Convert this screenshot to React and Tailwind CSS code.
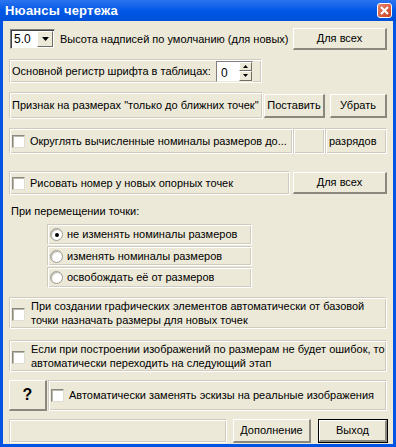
import React from 'react';

const font = { fontFamily: '"Liberation Sans", Arial, sans-serif' };

const Btn = ({ children, className = '', def = false }) => (
  <div className={`${def ? 'border border-black' : ''} ${className}`}>
    <div className="h-full w-full flex items-center justify-center bg-[#ece9d8] border-t border-l border-white border-b-2 border-r-2 border-b-[#8a887c] border-r-[#8a887c] text-black whitespace-nowrap">
      {children}
    </div>
  </div>
);

const Panel = ({ children, className = '' }) => (
  <div className={`border border-t-[#cfccbf] border-l-[#cfccbf] border-b-white border-r-white shadow-[inset_1px_1px_0_#ffffff,inset_-1px_-1px_0_#cfccbf] flex items-center whitespace-nowrap ${className}`}>
    {children}
  </div>
);

const Check = () => (
  <div className="w-[13px] h-[13px] shrink-0 bg-white border border-t-[#8c8a80] border-l-[#8c8a80] border-b-[#e0ddd2] border-r-[#e0ddd2] shadow-[inset_1px_1px_0_#b8b5aa]" />
);

const Radio = ({ on }) => (
  <div className="w-[13px] h-[13px] shrink-0 rounded-full bg-white border border-[#9e9c92] flex items-center justify-center shadow-[inset_1px_1px_1px_#b8b5aa]">
    {on && <div className="w-[4px] h-[4px] rounded-full bg-black" />}
  </div>
);

export default function App() {
  return (
    <div style={font} className="w-[396px] h-[447px] flex flex-col bg-[#0054e3] text-[11px] text-black">
      <div className="h-[21px] shrink-0 flex items-center justify-between pl-[5px] pr-[4px] bg-gradient-to-b from-[#2a74f0] via-[#0058e6] to-[#0050d8]">
        <span className="text-white font-bold text-[13px] tracking-[0.2px]">Нюансы чертежа</span>
        <div className="w-[15px] h-[15px] rounded-[3px] border border-white bg-gradient-to-br from-[#e8856a] to-[#c8401c] flex items-center justify-center">
          <svg width="9" height="9" viewBox="0 0 9 9">
            <path d="M1 1 L8 8 M8 1 L1 8" stroke="white" strokeWidth="2" />
          </svg>
        </div>
      </div>

      <div className="flex-1 mx-[3px] mb-[3px] bg-[#ece9d8] pl-[6px] pr-[6px] pt-[7px] flex flex-col">
        {/* row 1 */}
        <div className="flex items-center h-[22px] whitespace-nowrap">
          <div className="ml-[1px] w-[45px] h-[20px] shrink-0 bg-white border border-t-[#808080] border-l-[#808080] border-b-[#ece9d8] border-r-[#ece9d8] shadow-[inset_1px_1px_0_#404040] flex items-center">
            <span className="pl-[3px] flex-1 text-[12px]">5.0</span>
            <div className="w-[16px] h-[16px] mr-[1px] bg-[#ece9d8] border-t border-l border-white border-b border-r border-b-[#716f64] border-r-[#716f64] flex items-center justify-center">
              <svg width="7" height="4" viewBox="0 0 7 4"><path d="M0 0 H7 L3.5 4 Z" fill="black" /></svg>
            </div>
          </div>
          <span className="ml-[5px]">Высота надписей по умолчанию (для новых)</span>
          <Btn className="ml-auto w-[94px] h-[22px] shrink-0">Для всех</Btn>
        </div>

        {/* row 2 */}
        <Panel className="mt-[9px] w-[253px] h-[24px]">
          <span className="pl-[2px]">Основной регистр шрифта в таблицах:</span>
          <div className="ml-auto mr-[8px] w-[37px] h-[21px] shrink-0 bg-white border border-t-[#808080] border-l-[#808080] border-b-[#ece9d8] border-r-[#ece9d8] flex">
            <span className="flex-1 pl-[4px] pt-[2px] text-[12px]">0</span>
            <div className="w-[13px] flex flex-col">
              <div className="flex-1 bg-[#ece9d8] border-t border-l border-white border-b border-r border-b-[#716f64] border-r-[#716f64] flex items-center justify-center">
                <svg width="5" height="3" viewBox="0 0 5 3"><path d="M0 3 H5 L2.5 0 Z" fill="black" /></svg>
              </div>
              <div className="flex-1 bg-[#ece9d8] border-t border-l border-white border-b border-r border-b-[#716f64] border-r-[#716f64] flex items-center justify-center">
                <svg width="5" height="3" viewBox="0 0 5 3"><path d="M0 0 H5 L2.5 3 Z" fill="black" /></svg>
              </div>
            </div>
          </div>
        </Panel>

        {/* row 3 */}
        <div className="mt-[9px] flex items-center h-[27px]">
          <Panel className="w-[254px] h-[27px] shrink-0">
            <span className="pl-[2px]">Признак на размерах "только до ближних точек"</span>
          </Panel>
          <Btn className="ml-[1px] w-[61px] h-[24px] shrink-0">Поставить</Btn>
          <Btn className="ml-[5px] w-[57px] h-[24px] shrink-0">Убрать</Btn>
        </div>

        {/* row 4 */}
        <div className="mt-[9px] flex h-[26px]">
          <Panel className="w-[284px] h-[26px] shrink-0">
            <div className="ml-[2px]"><Check /></div>
            <span className="ml-[5px]">Округлять вычисленные номиналы размеров до...</span>
          </Panel>
          <Panel className="w-[32px] h-[26px] shrink-0" />
          <Panel className="w-[62px] h-[26px] shrink-0">
            <span className="pl-[3px]">разрядов</span>
          </Panel>
        </div>

        {/* row 5 */}
        <div className="mt-[17px] flex items-center h-[24px]">
          <Panel className="w-[281px] h-[24px] shrink-0">
            <div className="ml-[2px]"><Check /></div>
            <span className="ml-[5px]">Рисовать номер у новых опорных точек</span>
          </Panel>
          <Btn className="ml-auto w-[94px] h-[22px] shrink-0">Для всех</Btn>
        </div>

        {/* row 6 */}
        <div className="mt-[9px] pl-[2px] h-[14px] leading-[14px]">При перемещении точки:</div>
        <div className="mt-[6px] ml-[38px] w-[205px] flex flex-col gap-[1px]">
          <Panel className="h-[21px]">
            <div className="ml-[2px]"><Radio on /></div>
            <span className="ml-[4px]">не изменять номиналы размеров</span>
          </Panel>
          <Panel className="h-[20px]">
            <div className="ml-[2px]"><Radio /></div>
            <span className="ml-[4px]">изменять номиналы размеров</span>
          </Panel>
          <Panel className="h-[21px]">
            <div className="ml-[2px]"><Radio /></div>
            <span className="ml-[4px]">освобождать её от размеров</span>
          </Panel>
        </div>

        {/* row 7 */}
        <Panel className="mt-[9px] h-[32px] w-[378px]">
          <div className="ml-[2px] mt-[3px]"><Check /></div>
          <span className="ml-[6px] leading-[14px]">При создании графических элементов автоматически от базовой<br />точки назначать размеры для новых точек</span>
        </Panel>

        {/* row 8 */}
        <Panel className="mt-[11px] h-[32px] w-[378px]">
          <div className="ml-[2px] mt-[3px]"><Check /></div>
          <span className="ml-[6px] leading-[14px]">Если при построении изображений по размерам не будет ошибок, то<br />автоматически переходить на следующий этап</span>
        </Panel>

        {/* row 9 */}
        <div className="mt-[8px] flex h-[31px]">
          <Btn className="w-[38px] h-[31px] shrink-0"><span className="font-bold text-[16px]">?</span></Btn>
          <Panel className="ml-[1px] flex-1 h-[31px]">
            <div className="ml-[2px]"><Check /></div>
            <span className="ml-[5px]">Автоматически заменять эскизы на реальные изображения</span>
          </Panel>
        </div>

        {/* row 10 */}
        <div className="mt-[8px] flex h-[24px]">
          <Panel className="w-[218px] h-[24px] shrink-0" />
          <Btn className="ml-[6px] w-[78px] h-[24px] shrink-0">Дополнение</Btn>
          <Btn def className="ml-[7px] w-[70px] h-[24px] shrink-0">Выход</Btn>
        </div>
      </div>
    </div>
  );
}
